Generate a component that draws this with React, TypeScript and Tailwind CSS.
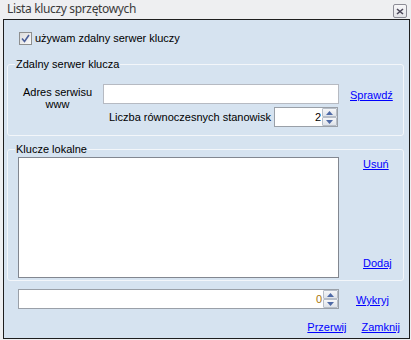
import React from "react";

function Spin({ value, w, valueCls }: { value: string; w: string; valueCls: string }) {
  return (
    <div className={`${w} h-[20px] bg-white border border-[#9aa0a8] flex items-stretch`}>
      <div className={`flex-1 flex items-center justify-end pr-[1px] text-[11px] leading-[13px] ${valueCls}`}>{value}</div>
      <div className="w-[15px] flex flex-col">
        <div className="flex-1 border border-[#b7bec8] rounded-[1px] bg-gradient-to-b from-[#f6f7f9] to-[#dfe3e9] flex items-center justify-center">
          <svg width="7" height="4" viewBox="0 0 7 4"><path d="M0 4 L3.5 0 L7 4 Z" fill="#4f6aa6" /></svg>
        </div>
        <div className="flex-1 border border-[#b7bec8] rounded-[1px] bg-gradient-to-b from-[#f6f7f9] to-[#dfe3e9] flex items-center justify-center">
          <svg width="7" height="4" viewBox="0 0 7 4"><path d="M0 0 L3.5 4 L7 0 Z" fill="#4f6aa6" /></svg>
        </div>
      </div>
    </div>
  );
}

function Link({ children }: { children: React.ReactNode }) {
  return <span className="text-[11px] leading-[13px] text-[#0000ff] underline underline-offset-[1px]">{children}</span>;
}

export default function App() {
  return (
    <div
      className="w-[411px] h-[340px] bg-[#eeeff1] overflow-hidden text-black"
      style={{ fontFamily: '"Liberation Sans", Arial, sans-serif' }}
    >
      {/* title bar */}
      <div className="h-[19px] flex items-start justify-between">
        <span
          className="ml-[7px] mt-[1px] text-[12px] leading-[16px] tracking-[-0.35px] text-[#3a3a3a]"
          style={{ fontFamily: '"Noto Sans", "Open Sans", sans-serif' }}
        >
          Lista kluczy sprzętowych
        </span>
        <div className="mt-[4px] mr-[4px] w-[14px] h-[14px] border border-[#8c8c96] rounded-[2px] bg-gradient-to-b from-[#f7f7f9] to-[#e3e4e8] flex items-center justify-center">
          <svg width="8" height="7" viewBox="0 0 8 7">
            <path d="M1 1 L7 6 M7 1 L1 6" stroke="#4a4658" strokeWidth="1.6" />
          </svg>
        </div>
      </div>

      {/* main panel */}
      <div className="ml-[3px] w-[407px] h-[320px] border border-[#1e1e1e] bg-[#d6e3f0] flex flex-col">
        {/* checkbox row */}
        <div className="mt-[12px] ml-[15px] h-[13px] flex items-center gap-[3px]">
          <div className="w-[13px] h-[13px] border border-[#8e8f8f] bg-gradient-to-br from-[#dcdcdc] to-[#fafafa] flex items-center justify-center">
            <svg width="9" height="9" viewBox="0 0 9 9">
              <path d="M1 4.5 L3.5 7.5 L8 1" fill="none" stroke="#4b5f9a" strokeWidth="1.6" />
            </svg>
          </div>
          <span className="text-[11px] leading-[13px]">używam zdalny serwer kluczy</span>
        </div>

        {/* group 1 */}
        <div className="mt-[19px] ml-[3px] w-[397px] h-[72px] relative border border-[#f3f6fa] rounded-[3px]">
          <span className="absolute left-[7px] top-[-7px] px-[1px] bg-[#d6e3f0] text-[11px] leading-[13px]">
            Zdalny serwer klucza
          </span>
          <div className="pt-[19px] grid grid-cols-[95px_auto] grid-rows-[20px_20px] gap-y-[3px]">
            <div className="row-span-2 pl-[4px] mt-[2px] text-center text-[11px] leading-[12px]">
              Adres serwisu
              <br />
              www
            </div>
            <div className="flex items-center">
              <div className="w-[236px] h-[20px] bg-white border border-[#b6bac2]" />
              <div className="ml-[11px]">
                <Link>Sprawdź</Link>
              </div>
            </div>
            <div className="w-[235px] flex items-center justify-end gap-[3px]">
              <span className="text-[11px] leading-[13px]">Liczba równoczesnych stanowisk</span>
              <Spin value="2" w="w-[64px]" valueCls="text-black" />
            </div>
          </div>
        </div>

        {/* group 2 */}
        <div className="mt-[13px] ml-[3px] w-[397px] h-[132px] relative border border-[#f3f6fa] rounded-[3px] flex items-start">
          <span className="absolute left-[7px] top-[-7px] px-[1px] bg-[#d6e3f0] text-[11px] leading-[13px]">
            Klucze lokalne
          </span>
          <div className="ml-[10px] mt-[7px] w-[321px] h-[121px] bg-white border border-[#828790]" />
          <div className="ml-[24px] mt-[8px] h-[112px] flex flex-col justify-between items-start">
            <Link>Usuń</Link>
            <Link>Dodaj</Link>
          </div>
        </div>

        {/* detect row */}
        <div className="mt-[6px] ml-[14px] flex items-center">
          <Spin value="0" w="w-[321px]" valueCls="text-[#a8740c]" />
          <div className="ml-[17px]">
            <Link>Wykryj</Link>
          </div>
        </div>

        {/* bottom links */}
        <div className="mt-[10px] pr-[9px] flex justify-end gap-[15px]">
          <Link>Przerwij</Link>
          <Link>Zamknij</Link>
        </div>
      </div>
    </div>
  );
}
